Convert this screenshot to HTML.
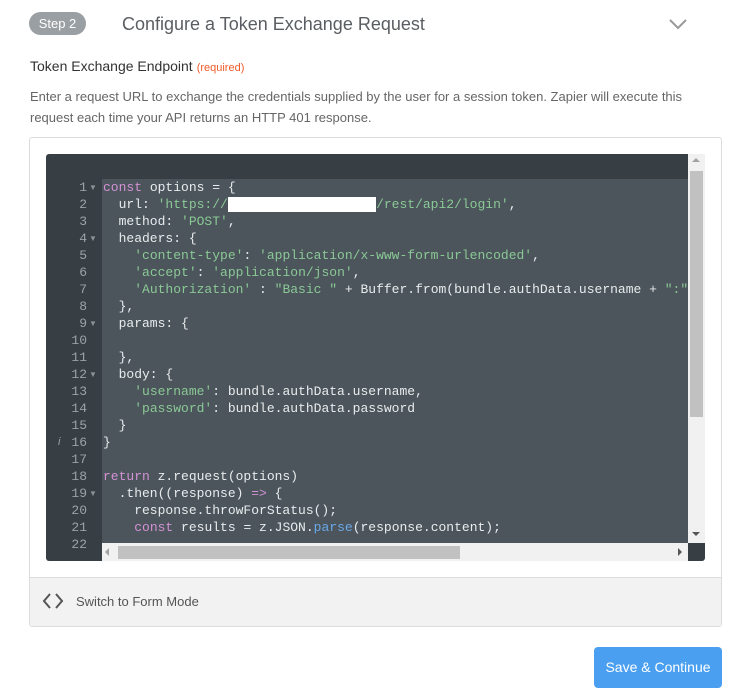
<!DOCTYPE html>
<html><head><style>
*{margin:0;padding:0;box-sizing:border-box}
body{width:754px;height:696px;background:#fff;font-family:"Liberation Sans",sans-serif;position:relative;overflow:hidden}
.abs{position:absolute}
.step{left:29px;top:12px;width:57px;height:23px;border-radius:12px;background:#999fa3;color:#fff;font-size:13px;line-height:23px;text-align:center}
.title{left:122px;top:12px;font-size:18px;color:#5a5e62;line-height:24px}
.lbl{left:30px;top:58px;font-size:14px;color:#333}
.lbl span{color:#f05a28;font-size:11px;margin-left:4px}
.desc{left:30px;top:86px;width:686px;font-size:13px;color:#666;line-height:21px}
.box{left:29px;top:137px;width:693px;height:490px;border:1px solid #dcdcdc;border-radius:3px;overflow:hidden}
.ed{left:46px;top:154px;width:659px;height:407px;background:#373f45;border-radius:3px;overflow:hidden}
.code{left:102px;top:179px;width:587px;height:364px;background:#4b555b}
.ln{position:absolute;left:46px;width:41px;text-align:right;font-family:"Liberation Mono",monospace;font-size:13px;color:#9aa3a8;line-height:17px;white-space:nowrap}
.ar{position:absolute;left:89px;font-size:8px;color:#8a9398;line-height:17px}
.cl{position:absolute;left:103px;font-family:"Liberation Mono",monospace;font-size:13px;color:#e8ecee;line-height:17px;white-space:pre}
.s{color:#8bc896}.k{color:#d491d4}.f{color:#6aa8e8}
.foot{left:30px;top:577px;width:691px;height:49px;background:#f2f2f2;border-top:1px solid #dcdcdc}
.btn{left:594px;top:647px;width:128px;height:41px;background:#4a9ff0;border-radius:4px;color:#fff;font-size:14px;text-align:center;line-height:41px}
</style></head><body>
<div class="abs step">Step 2</div>
<div class="abs title">Configure a Token Exchange Request</div>
<svg class="abs" style="left:668px;top:17px" width="20" height="14"><path d="M2 3 L10 11 L18 3" stroke="#999" stroke-width="2" fill="none"/></svg>
<div class="abs lbl">Token Exchange Endpoint<span>(required)</span></div>
<div class="abs desc">Enter a request URL to exchange the credentials supplied by the user for a session token. Zapier will execute this request each time your API returns an HTTP 401 response.</div>
<div class="abs box"></div>
<div class="abs ed"></div>
<div class="abs code"></div>
<div class="abs" style="left:688px;top:154px;width:17px;height:389px;background:#f1f1f1"></div>
<div class="abs" style="left:690px;top:171px;width:13px;height:246px;background:#c1c1c1"></div>
<div class="abs" style="left:102px;top:543px;width:586px;height:18px;background:#f1f1f1"></div>
<div class="abs" style="left:118px;top:546px;width:342px;height:13px;background:#c1c1c1"></div>
<div class="abs" style="left:692px;top:158px;width:0;height:0;border:4px solid transparent;border-bottom-color:#a3a3a3;border-top:0"></div>
<div class="abs" style="left:692px;top:532px;width:0;height:0;border:4px solid transparent;border-top-color:#555;border-bottom:0"></div>
<div class="abs" style="left:105px;top:548px;width:0;height:0;border:4px solid transparent;border-right-color:#a3a3a3;border-left:0"></div>
<div class="abs" style="left:678px;top:548px;width:0;height:0;border:4px solid transparent;border-left-color:#555;border-right:0"></div>

<div class="ln" style="top:179px">1</div><div class="ar" style="top:179px">▼</div>
<div class="ln" style="top:196px">2</div>
<div class="ln" style="top:213px">3</div>
<div class="ln" style="top:230px">4</div><div class="ar" style="top:230px">▼</div>
<div class="ln" style="top:247px">5</div>
<div class="ln" style="top:264px">6</div>
<div class="ln" style="top:281px">7</div>
<div class="ln" style="top:298px">8</div>
<div class="ln" style="top:315px">9</div><div class="ar" style="top:315px">▼</div>
<div class="ln" style="top:332px">10</div>
<div class="ln" style="top:349px">11</div>
<div class="ln" style="top:366px">12</div><div class="ar" style="top:366px">▼</div>
<div class="ln" style="top:383px">13</div>
<div class="ln" style="top:400px">14</div>
<div class="ln" style="top:417px">15</div>
<div class="ln" style="top:434px">16</div><div class="abs" style="left:58px;top:434px;font-size:11px;font-style:italic;color:#9aa3a8;line-height:17px">i</div>
<div class="ln" style="top:451px">17</div>
<div class="ln" style="top:468px">18</div>
<div class="ln" style="top:485px">19</div><div class="ar" style="top:485px">▼</div>
<div class="ln" style="top:502px">20</div>
<div class="ln" style="top:519px">21</div>
<div class="ln" style="top:536px">22</div>

<div class="cl" style="top:179px"><span class="k">const</span> options = {</div>
<div class="cl" style="top:196px">  url: <span class="s">'https://</span><span style="background:#fff;color:#fff">aaaaaaaaaaaaaaaaaaa</span><span class="s">/rest/api2/login'</span>,</div>
<div class="cl" style="top:213px">  method: <span class="s">'POST'</span>,</div>
<div class="cl" style="top:230px">  headers: {</div>
<div class="cl" style="top:247px">    <span class="s">'content-type'</span>: <span class="s">'application/x-www-form-urlencoded'</span>,</div>
<div class="cl" style="top:264px">    <span class="s">'accept'</span>: <span class="s">'application/json'</span>,</div>
<div class="cl" style="top:281px">    <span class="s">'Authorization'</span> : <span class="s">"Basic "</span> + Buffer.from(bundle.authData.username + <span class="s">":"</span></div>
<div class="cl" style="top:298px">  },</div>
<div class="cl" style="top:315px">  params: {</div>
<div class="cl" style="top:349px">  },</div>
<div class="cl" style="top:366px">  body: {</div>
<div class="cl" style="top:383px">    <span class="s">'username'</span>: bundle.authData.username,</div>
<div class="cl" style="top:400px">    <span class="s">'password'</span>: bundle.authData.password</div>
<div class="cl" style="top:417px">  }</div>
<div class="cl" style="top:434px">}</div>
<div class="cl" style="top:468px"><span class="k">return</span> z.request(options)</div>
<div class="cl" style="top:485px">  .then((response) <span class="k">=&gt;</span> {</div>
<div class="cl" style="top:502px">    response.throwForStatus();</div>
<div class="cl" style="top:519px">    <span class="k">const</span> results = z.JSON.<span class="f">parse</span>(response.content);</div>

<div class="abs foot"></div>
<svg class="abs" style="left:42px;top:592px" width="22" height="18"><path d="M8 2 L2 9 L8 16 M14 2 L20 9 L14 16" stroke="#555" stroke-width="2" fill="none"/></svg>
<div class="abs" style="left:76px;top:594px;font-size:13px;color:#555">Switch to Form Mode</div>
<div class="abs btn">Save &amp; Continue</div>
</body></html>
